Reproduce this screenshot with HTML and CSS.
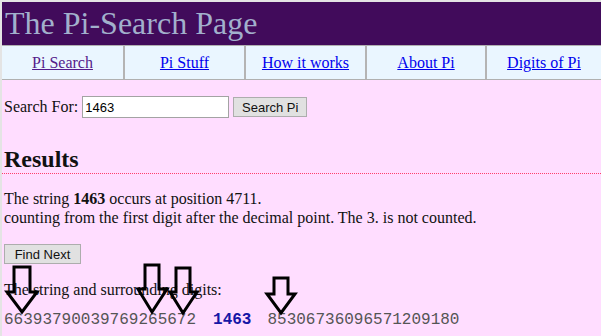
FILE: index.html
```html
<!DOCTYPE html>
<html>
<head>
<meta charset="utf-8">
<title>The Pi-Search Page</title>
<link rel="stylesheet" href="styles.css">
</head>
<body>
<div class="page">
  <header class="masthead">
    <h1 class="title">The Pi-Search Page</h1>
  </header>
  <nav class="nav">
    <div class="cell"><a class="visited" href="#">Pi Search</a></div>
    <div class="cell"><a href="#">Pi Stuff</a></div>
    <div class="cell"><a href="#">How it works</a></div>
    <div class="cell"><a href="#">About Pi</a></div>
    <div class="cell"><a href="#">Digits of Pi</a></div>
  </nav>
  <main class="content">
    <form class="search">
      <label class="label" for="q">Search For:</label>
      <input class="field" id="q" type="text" value="1463">
      <button class="btn btn-search" type="button">Search Pi</button>
    </form>
    <h2 class="results">Results</h2>
    <p class="found">The string <b>1463</b> occurs at position 4711.<br>counting from the first digit after the decimal point. The 3. is not counted.</p>
    <button class="btn btn-next" type="button">Find Next</button>
    <p class="around">The string and surrounding digits:</p>
    <div class="digits"><span>66393790039769265672</span><span class="hit">1463</span><span>85306736096571209180</span></div>
  </main>
  <svg class="arrows" width="601" height="336" viewBox="0 0 601 336">
    <polygon points="14,267 30,267 30,292 37,292 22,312 7,292 14,292"/>
    <polygon points="145,265 159,265 159,289 167,289 152,312 138,289 145,289"/>
    <polygon points="176,268 190,268 190,292 197,292 183,313 170,292 176,292"/>
    <polygon points="274,278 288,278 288,294 295,294 281,313 267,294 274,294"/>
  </svg>
</div>
</body>
</html>
```
FILE: styles.css
```css
html, body {
  margin: 0;
  padding: 0;
}
body {
  background: #ffddff;
  font-family: "Liberation Serif", "Times New Roman", serif;
  font-size: 16px;
  color: #111;
  width: 601px;
  height: 336px;
  overflow: hidden;
}
.page {
  position: relative;
  border-top: 2px solid #e4e4e4;
  border-left: 2px solid #e4e4e4;
  height: 334px;
}
.masthead {
  background: #410b5b;
  height: 43px;
}
.title {
  margin: 0;
  padding-left: 3px;
  font-weight: normal;
  font-size: 32px;
  line-height: 43px;
  color: #a2b0cc;
}
.nav {
  display: grid;
  grid-template-columns: 121px 121px 121px 120px 1fr;
  background: #eaf6ff;
  border-top: 1px solid #b0b0b0;
  border-bottom: 1px solid #b0b0b0;
  height: 33px;
}
.cell {
  display: flex;
  align-items: center;
  justify-content: center;
  border-left: 2px solid #b4b4b4;
}
.cell:first-child {
  border-left: none;
}
.cell a {
  color: #0000ee;
  text-decoration: underline;
  line-height: 18px;
}
.cell a.visited {
  color: #551a8b;
}
.content {
  padding-left: 2px;
}
.search {
  display: flex;
  align-items: center;
  margin: 16px 0 0;
  height: 22px;
}
.label {
  margin-right: 4px;
}
.field {
  box-sizing: border-box;
  width: 147px;
  height: 22px;
  margin: 0 4px 0 0;
  padding: 0 2px;
  border: 1px solid #a3a3a3;
  background: #fff;
  font-family: "Liberation Sans", Arial, sans-serif;
  font-size: 13px;
  color: #000;
}
.btn {
  box-sizing: border-box;
  height: 20px;
  margin: 0;
  padding: 0;
  background: #e1e1e1;
  border: 1px solid #adadad;
  font-family: "Liberation Sans", Arial, sans-serif;
  font-size: 13px;
  color: #111;
}
.btn-search {
  width: 74px;
}
.btn-next {
  display: block;
  width: 77px;
  margin-top: 17px;
}
.results {
  margin: 27px 0 0 -2px;
  padding-left: 2px;
  font-size: 24px;
  line-height: 28px;
  font-weight: bold;
  border-bottom: 1px dotted #ff3d6a;
}
.found {
  margin: 15px 0 0;
  line-height: 19px;
}
.around {
  margin: 16px 0 0;
  line-height: 19px;
}
.digits {
  margin-top: 12px;
  font-family: "Liberation Mono", "Courier New", monospace;
  font-size: 16px;
  line-height: 19px;
  color: #555;
  white-space: nowrap;
}
.hit {
  font-weight: bold;
  color: #1616a6;
  margin: 0 16px 0 17px;
}
.arrows {
  position: absolute;
  left: -2px;
  top: -2px;
  pointer-events: none;
}
.arrows polygon {
  fill: none;
  stroke: #000;
  stroke-width: 3;
  stroke-linejoin: miter;
}
```
